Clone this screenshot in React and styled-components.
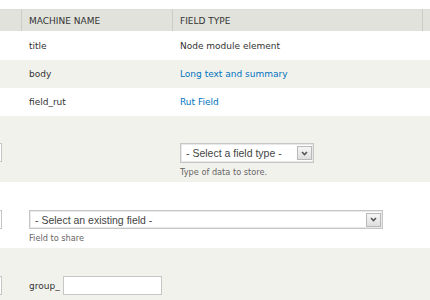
import React from "react";
import styled, { createGlobalStyle } from "styled-components";

const GlobalStyle = createGlobalStyle`
  html, body {
    margin: 0;
    padding: 0;
    background: #fff;
  }
`;

const fields = [
  { machine: "title", type: "Node module element", link: false },
  { machine: "body", type: "Long text and summary", link: true },
  { machine: "field_rut", type: "Rut Field", link: true },
];

export default function App() {
  return (
    <>
      <GlobalStyle />
      <Page>
        <FieldTable>
          <colgroup>
            <col style={{ width: 101 }} />
            <col style={{ width: 151 }} />
            <col style={{ width: 250 }} />
            <col style={{ width: 98 }} />
          </colgroup>
          <thead>
            <tr>
              <Th />
              <Th>Machine name</Th>
              <Th>Field type</Th>
              <Th />
            </tr>
          </thead>
          <tbody>
            {fields.map((f, i) => (
              <Row key={f.machine} $odd={i % 2 === 1}>
                <Td $tall={i === 0} />
                <Td $tall={i === 0}>{f.machine}</Td>
                <Td $tall={i === 0}>
                  {f.link ? <Link href="#">{f.type}</Link> : f.type}
                </Td>
                <Td $tall={i === 0} />
              </Row>
            ))}
            <Row $odd>
              <AddTd $first>
                <CutBox />
              </AddTd>
              <AddTd />
              <AddTd>
                <FakeSelect $width={134}>
                  <span>- Select a field type -</span>
                  <Arrow />
                </FakeSelect>
                <Description>Type of data to store.</Description>
              </AddTd>
              <AddTd />
            </Row>
            <Row>
              <AddTd $first $top={28}>
                <CutBox />
              </AddTd>
              <AddTd colSpan={2} $top={28}>
                <FakeSelect $width={354} $height={19}>
                  <span>- Select an existing field -</span>
                  <Arrow />
                </FakeSelect>
                <Description>Field to share</Description>
              </AddTd>
              <AddTd $top={28} />
            </Row>
            <Row $odd>
              <AddTd $first $top={28}>
                <CutBox />
              </AddTd>
              <AddTd $top={28}>
                <Prefix>
                  group_
                  <TextInput />
                </Prefix>
              </AddTd>
              <AddTd $top={28} />
              <AddTd $top={28} />
            </Row>
          </tbody>
        </FieldTable>
      </Page>
    </>
  );
}

function Arrow() {
  return (
    <ArrowButton>
      <svg width="7" height="5" viewBox="0 0 7 5">
        <polyline
          points="1,1 3.5,3.5 6,1"
          fill="none"
          stroke="#555"
          strokeWidth="1.6"
        />
      </svg>
    </ArrowButton>
  );
}

const Page = styled.div`
  width: 430px;
  height: 300px;
  overflow: hidden;
  padding-top: 9px;
  box-sizing: border-box;
  font-family: "DejaVu Sans", Verdana, sans-serif;
  font-size: 9px;
  color: #333;
`;

const FieldTable = styled.table`
  margin-left: -80px;
  width: 600px;
  table-layout: fixed;
  border-collapse: separate;
  border-spacing: 0;
`;

const Th = styled.th`
  height: 22px;
  padding: 0 0 0 7px;
  background: #e1e2dc;
  border-left: 1px solid #cbccc6;
  border-top: 1px solid #dcddd7;
  box-sizing: border-box;
  text-align: left;
  font-weight: normal;
  text-transform: uppercase;
  color: #333;
  &:first-child {
    border-left: none;
  }
`;

const Row = styled.tr`
  background: ${(p) => (p.$odd ? "#f2f2ed" : "#fff")};
`;

const Td = styled.td`
  height: ${(p) => (p.$tall ? 29 : 28)}px;
  padding: 0 8px;
  box-sizing: border-box;
  line-height: 14px;
  vertical-align: middle;
`;

const AddTd = styled.td`
  padding: ${(p) => p.$top || 27}px 8px 4px;
  vertical-align: top;
  text-align: ${(p) => (p.$first ? "right" : "left")};
  ${(p) => (p.$first ? "padding-right: 19px;" : "")}
`;

const Link = styled.a`
  color: #0074bd;
  text-decoration: none;
`;

const FakeSelect = styled.div`
  width: ${(p) => p.$width}px;
  height: ${(p) => p.$height || 20}px;
  box-sizing: border-box;
  display: flex;
  align-items: center;
  justify-content: space-between;
  padding: 0 1px 0 5px;
  background: #fff;
  border: 1px solid #c6c6c6;
  box-shadow: inset 0 0 0 1px #e8e8e8;
  font-family: "Liberation Sans", Arial, sans-serif;
  font-size: 10.5px;
  color: #444;
`;

const ArrowButton = styled.div`
  width: 15px;
  height: 14px;
  box-sizing: border-box;
  display: flex;
  align-items: center;
  justify-content: center;
  border: 1px solid #b9b9b9;
  background: linear-gradient(#f6f6f6, #dedede);
`;

const Description = styled.div`
  margin-top: 3px;
  font-size: 8.2px;
  line-height: 12px;
  color: #666;
`;

const CutBox = styled.div`
  display: inline-block;
  width: 60px;
  height: 19px;
  box-sizing: border-box;
  background: #fff;
  border: 1px solid #c6c6c6;
`;

const Prefix = styled.label`
  display: flex;
  align-items: center;
  gap: 3px;
  line-height: 14px;
`;

const TextInput = styled.input`
  width: 99px;
  height: 19px;
  box-sizing: border-box;
  margin: 0;
  padding: 0 3px;
  border: 1px solid #c6c6c6;
  background: #fff;
  font: inherit;
`;
